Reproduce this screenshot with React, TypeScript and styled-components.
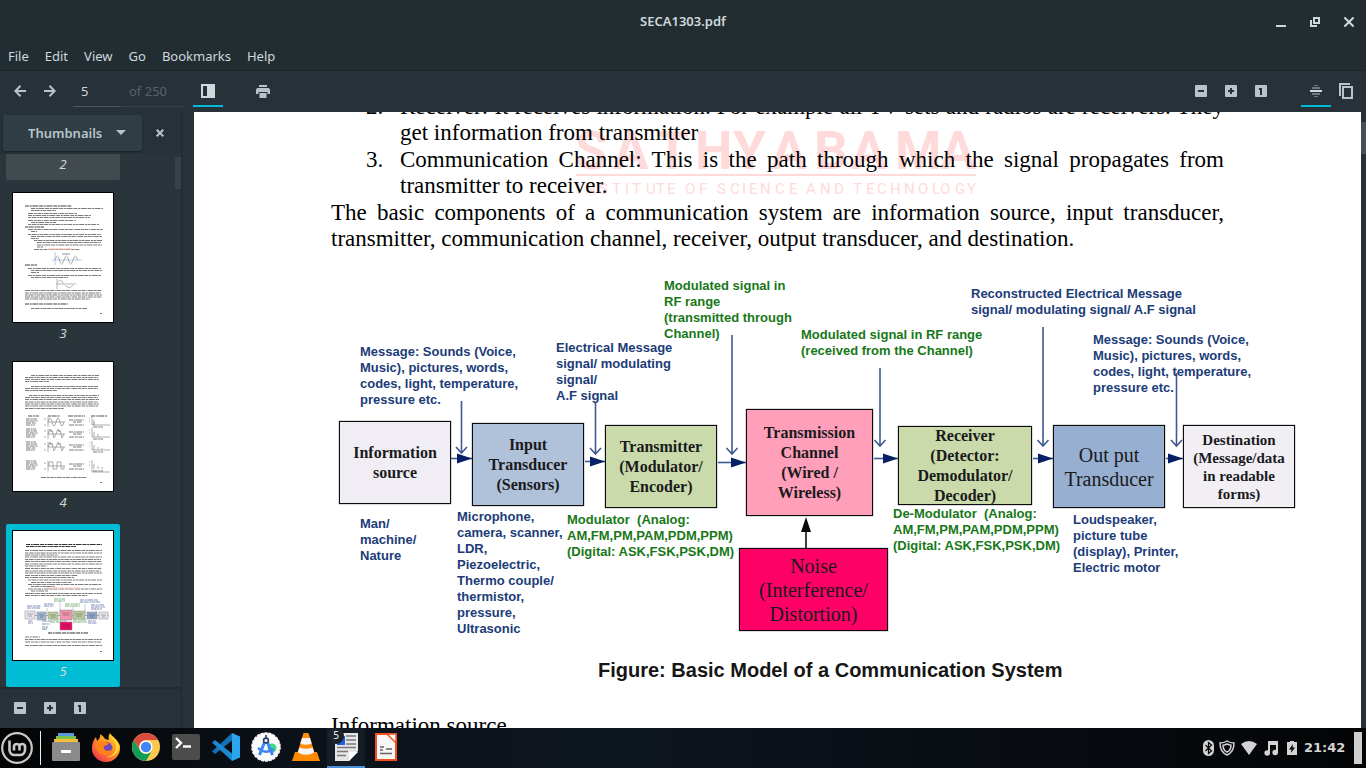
import React from "react";
import styled, { createGlobalStyle } from "styled-components";

const GlobalStyle = createGlobalStyle`
  *, *::before, *::after { box-sizing: border-box; }
  html, body { margin: 0; height: 100%; overflow: hidden; background: #263238; }
  body { font-family: "Noto Sans", "Open Sans", sans-serif; font-size: 13px; color: #cfd8dc; }
  button, input, select { font: inherit; color: inherit; }
  svg { display: block; }
`;

/* ---------- window frame ---------- */

const Screen = styled.div`
  display: flex;
  flex-direction: column;
  height: 100vh;
`;

const TitleBar = styled.header`
  position: relative;
  display: flex;
  align-items: center;
  justify-content: center;
  height: 44px;
  flex: none;
  padding-bottom: 2px;
  background: #222d32;
`;

const Title = styled.h1`
  margin: 0;
  font-size: 13px;
  line-height: 18px;
  font-weight: 600;
`;

const WindowButtons = styled.div`
  position: absolute;
  top: 0;
  right: 0;
  height: 44px;
  display: flex;
  align-items: center;
`;

const WindowButton = styled.button`
  width: 34px;
  height: 34px;
  padding: 0;
  border: 0;
  background: none;
  display: flex;
  align-items: center;
  justify-content: center;
`;

const MenuBar = styled.nav`
  display: flex;
  align-items: center;
  gap: 16px;
  height: 27px;
  flex: none;
  padding: 0 8px 2px;
  background: #222d32;
  border-bottom: 1px solid #1d272b;
`;

const MenuItem = styled.button`
  padding: 0;
  border: 0;
  background: none;
  line-height: 24px;
`;

const Toolbar = styled.div`
  display: flex;
  align-items: stretch;
  height: 41px;
  flex: none;
  padding: 4px 5px 5px;
  background: #263238;
`;

const ToolButton = styled.button<{ $active?: boolean; $gapBefore?: number }>`
  display: flex;
  align-items: center;
  justify-content: center;
  width: 30px;
  margin-left: ${(p) => p.$gapBefore ?? 0}px;
  padding: 2px 0 0;
  border: 0;
  border-bottom: 2px solid ${(p) => (p.$active ? "#00bcd4" : "transparent")};
  background: none;
  color: #b9c4ca;
`;

const PageField = styled.label`
  display: flex;
  margin: 0 0 0 8px;
  width: 112px;
  font-size: 13px;
`;

const PageInput = styled.input`
  width: 48px;
  padding: 0 8px;
  border: 0;
  border-bottom: 1px solid #4d585d;
  background: none;
  outline: 0;
`;

const PageTotal = styled.span`
  flex: 1;
  display: flex;
  align-items: center;
  padding-left: 8px;
  border-bottom: 1px solid #333f45;
  color: #56626a;
`;

const Spacer = styled.div`
  flex: 1;
`;

/* ---------- side pane ---------- */

const Body = styled.div`
  display: flex;
  flex: 1;
  min-height: 0;
`;

const SidePane = styled.aside`
  display: flex;
  flex-direction: column;
  width: 194px;
  flex: none;
  border-right: 12px solid #263238;
  background: #263238;
  box-shadow: inset -1px 0 0 #202b30;
`;

const PaneHeader = styled.div`
  display: flex;
  align-items: center;
  height: 42px;
  flex: none;
  padding: 0 3px;
`;

const PaneSelectWrap = styled.div`
  position: relative;
  width: 140px;
  padding-right: 1px;
`;

const PaneSelect = styled.select`
  appearance: none;
  width: 100%;
  height: 36px;
  padding: 0 25px;
  border: 0;
  border-radius: 2px;
  background: #2f3d44;
  box-shadow: 0 1px 2px rgba(0, 0, 0, 0.35);
  font-weight: 600;
  color: #b9c4ca;
`;

const SelectCaret = styled.svg`
  position: absolute;
  right: 17px;
  top: 15px;
  pointer-events: none;
`;

const ThumbViewport = styled.div`
  position: relative;
  flex: 1;
  min-height: 0;
  overflow: hidden;
  background: #29353b;
  margin-right: 1px;
`;

const ThumbList = styled.ul`
  list-style: none;
  margin: -137px 0 0;
  padding: 0 6px;
  display: flex;
  flex-direction: column;
  align-items: flex-start;
  gap: 6px;
`;

const ThumbItem = styled.li<{ $tone: string }>`
  display: flex;
  flex-direction: column;
  align-items: center;
  width: 114px;
  height: 163px;
  padding-top: 6px;
  border-radius: 2px;
  background: ${(p) => p.$tone};
`;

const ThumbLabel = styled.span`
  font-style: italic;
  line-height: 20px;
`;

const ScrollThumb = styled.div<{ $top: number; $width: number; $height: number; $tone: string }>`
  position: absolute;
  right: 0;
  top: ${(p) => p.$top}px;
  width: ${(p) => p.$width}px;
  height: ${(p) => p.$height}px;
  background: ${(p) => p.$tone};
`;

const PaneFooter = styled.div`
  display: flex;
  height: 41px;
  flex: none;
  padding: 0 5px 2px;
  margin-right: 1px;
  border-top: 2px solid #202b30;
`;

/* ---------- document ---------- */

const Viewer = styled.main`
  position: relative;
  flex: 1;
  min-width: 0;
  overflow: hidden;
  background: #263238;
  padding-right: 5px;
`;

const Page = styled.article`
  position: relative;
  isolation: isolate;
  height: 100%;
  overflow: hidden;
  background: #fff;
  color: #000;
  font-family: "Liberation Serif", "Times New Roman", serif;
  font-size: 23px;
  line-height: 26px;
`;

const Column = styled.div`
  position: relative;
  max-width: 893px;
  margin: -18px auto 0;
`;

const Steps = styled.ol`
  list-style: none;
  margin: 0;
  padding: 0 0 0 35px;
`;

const Step = styled.li`
  display: grid;
  grid-template-columns: 34px 1fr;
  margin-bottom: 1px;
  text-align: justify;
`;

const Paragraph = styled.p`
  margin: 0;
  text-align: justify;
`;

const Watermark = styled.svg`
  position: absolute;
  left: 242px;
  top: 34px;
  z-index: -1;
`;

const Figure = styled.figure`
  position: relative;
  height: 462px;
  margin: -2px 0 1px;
`;

const Arrows = styled.svg`
  position: absolute;
  left: 0;
  top: 0;
`;

type BoxProps = { $x: number; $y: number; $w: number; $h: number; $fill: string; $size: number; $line: number; $bold?: boolean };

const Block = styled.div<BoxProps>`
  position: absolute;
  left: ${(p) => p.$x}px;
  top: ${(p) => p.$y}px;
  width: ${(p) => p.$w}px;
  height: ${(p) => p.$h}px;
  display: flex;
  align-items: center;
  justify-content: center;
  border: 1px solid #0c0c0e;
  box-shadow: 0 0 1px #2b2b2f;
  background: ${(p) => p.$fill};
  color: #1a1a1c;
  font-size: ${(p) => p.$size}px;
  line-height: ${(p) => p.$line}px;
  font-weight: ${(p) => (p.$bold ? 700 : 400)};
  text-align: center;
  white-space: pre;
`;

const Note = styled.div<{ $x: number; $y: number; $green?: boolean }>`
  position: absolute;
  left: ${(p) => p.$x}px;
  top: ${(p) => p.$y}px;
  color: ${(p) => (p.$green ? "#187818" : "#203c78")};
  font: 700 13px/16px "Liberation Sans", Arial, sans-serif;
  white-space: pre;
`;

const Caption = styled.figcaption`
  position: absolute;
  left: 267px;
  bottom: 30px;
  color: #161616;
  font: 700 20px/24px "Liberation Sans", Arial, sans-serif;
  white-space: nowrap;
`;

const SectionTitle = styled.h2`
  margin: 0;
  font-size: 23px;
  line-height: 26px;
  font-weight: 400;
`;

/* ---------- desktop panel ---------- */

const Panel = styled.footer`
  display: flex;
  align-items: center;
  height: 40px;
  flex: none;
  background: linear-gradient(90deg, #020304 0, #0b1118 20%, #0d151e 45%, #080c12 75%, #030405 100%);
`;

const MenuLauncher = styled.button`
  width: 36px;
  height: 40px;
  padding: 0 0 0 1px;
  border: 0;
  background: none;
`;

const PanelRule = styled.div`
  width: 1px;
  height: 34px;
  margin: 0 6px 0 4px;
  background: #eceff1;
`;

const Launcher = styled.button<{ $running?: boolean }>`
  position: relative;
  display: flex;
  align-items: center;
  justify-content: center;
  width: 38px;
  height: 40px;
  margin-right: 2px;
  padding: 0 0 2px;
  border: 0;
  background: ${(p) => (p.$running ? "#141c26" : "none")};
  box-shadow: ${(p) => (p.$running ? "inset 0 -2px 0 #4a90d9" : "none")};
`;

const Badge = styled.span`
  position: absolute;
  left: 1px;
  top: 0;
  width: 16px;
  height: 16px;
  border-radius: 8px;
  background: #1c232b;
  color: #f2f2f2;
  font: 10px/15px "Noto Sans", sans-serif;
`;

const Tray = styled.div`
  display: flex;
  align-items: center;
  color: #d3d3d3;
`;

const TrayIcon = styled.span<{ $width: number }>`
  display: flex;
  justify-content: center;
  width: ${(p) => p.$width}px;
`;

const Clock = styled.time`
  width: 52px;
  padding-left: 2px;
  font: 700 13px/16px "DejaVu Sans", sans-serif;
`;

const ShowDesktop = styled.button`
  width: 8px;
  height: 32px;
  margin-right: 4px;
  padding: 0;
  border: 0;
  background: #cfcfcf;
`;

/* ---------- symbols ---------- */

const Arrow = ({ flip }: { flip?: boolean }) => (
  <svg width="12" height="12" viewBox="0 0 12 12" fill="none" stroke="currentColor" strokeWidth="2">
    {flip ? <path d="M0 6h10.500M5.500 .8L10.700 6l-5.200 5.200" /> : <path d="M12 6H1.500M6.500 .8L1.300 6l5.200 5.200" />}
  </svg>
);

const Square = ({ kind }: { kind: "minus" | "plus" | "one" }) => (
  <svg width="12" height="12" viewBox="0 0 12 12">
    <rect width="12" height="12" rx="1" fill="#b9c4ca" />
    {kind === "one" ? (
      <path d="M4 3h3v7H5V5H4z" fill="#263238" />
    ) : (
      <path d={kind === "plus" ? "M3 5h2V3h2v2h2v2H7v2H5V7H3z" : "M3 5h6v2H3z"} fill="#263238" />
    )}
  </svg>
);

/* ---------- thumbnails ---------- */

type Row = [number, number, number];

const TextRows = ({ rows, tone = "#7c7c7c" }: { rows: Row[]; tone?: string }) => (
  <>
    {rows.map(([x1, x2, y], i) => (
      <line
        key={i}
        x1={x1}
        x2={x2}
        y1={y}
        y2={y}
        stroke={tone}
        strokeWidth="1.1"
        strokeDasharray={i % 3 === 0 ? "4 .7 2 .6 6 .8" : i % 3 === 1 ? "3 .6 5 .8 2 .5" : "5 .8 3 .6 4 .7 1 .6"}
      />
    ))}
  </>
);

const Sheet = ({ children }: { children?: React.ReactNode }) => (
  <svg width="102" height="131" viewBox="0 0 102 131">
    <rect x=".5" y=".5" width="101" height="130" fill="#fff" stroke="#000" />
    {children}
  </svg>
);

const PageThree = () => (
  <Sheet>
    <TextRows tone="#444" rows={[[13, 60, 14], [13, 32, 35], [13, 25, 73], [13, 56, 112]]} />
    <TextRows
      rows={[
        [19, 91, 16.5], [19, 44, 18.5], [16, 65, 21.5], [16, 79, 23.5], [16, 78, 25.5], [16, 64, 28.5], [19, 44, 30.5], [16, 87, 32.5],
        [16, 91, 37.5], [19, 25, 39.5], [16, 89, 42.5], [19, 90, 44.5], [19, 27, 46.5], [22, 90, 48.500], [25, 89, 50.500], [25, 90, 53], [25, 31, 55], [22, 68, 57.500],
        [16, 89, 76.500], [19, 90, 78.500], [19, 27, 80.500], [16, 89, 83.500], [19, 56, 85.500],
        [13, 90, 98.500], [13, 89, 101], [13, 90, 103], [13, 90, 105], [13, 78, 107], [19, 75, 116.500], [88, 90, 121.500],
      ]}
    />
    <path d="M36 57h24" stroke="#ffb9b0" />
    <path d="M43 60v13M40 68h30" stroke="#a9bfe6" strokeWidth=".8" />
    <path d="M43 68q2.500-8 4.500 0t4.500 0t4.500 0t4.500 0t4.500 0" fill="none" stroke="#888" strokeWidth=".7" />
    <path d="M45 87v10M44 92h20M46 90q3-4 5 1M53 93q4 5 8 0" fill="none" stroke="#999" strokeWidth=".7" />
    <path d="M50 62h8" stroke="#777" strokeWidth=".8" />
  </Sheet>
);

const PageFour = () => (
  <Sheet>
    <TextRows
      rows={[
        [19, 87, 14.500], [13, 86, 16.500], [13, 87, 18.500], [13, 37, 20.500], [19, 86, 25.500], [13, 86, 27.500], [13, 45, 29.500],
        [17, 87, 34.500], [13, 86, 36.500], [13, 87, 38.500], [13, 86, 41], [13, 87, 43], [13, 86, 45], [13, 52, 47.500],
        [29, 75, 116.500], [88, 90, 121.500],
      ]}
    />
    <TextRows tone="#555" rows={[[16, 27, 55], [36, 48, 55], [56, 73, 55], [79, 95, 55]]} />
    {[60, 72, 85, 104].map((y, i) => (
      <g key={y} stroke="#8a8a8a" strokeWidth=".7" fill="none">
        <TextRows rows={[[14, 25, y - 2], [14, 26, y], [14, 24, y + 2], [14, 23, y + 4]]} />
        {i > 0 && <TextRows rows={[[14, 24, y - 4]]} />}
        <path d={`M36 ${y - 4}v10M36 ${y + 1}h17M32 ${y - 2}h2M32 ${y + 4}h2`} />
        <path
          d={
            i === 3
              ? `M37 ${y + 1}v-4h4v7h4v-7h4v7h3v-3`
              : i === 0
              ? `M36 ${y + 1}q2-8 4 0t4 0t4 0t4 0`
              : `M36 ${y + 1}l2-5 1 3 1-2 2 8 2-4 2-5 1 3 1-2 2 8 2-4`
          }
        />
        <TextRows rows={[[57, 72, y - 1], [61, 70, y + 1], [57, 72, y + 4]]} />
        <path d={`M80 ${y - 5}v${i === 3 ? 12 : 9}h18M77 ${y - 3}h1M77 ${y}h1M82 ${y + 4}v-5M${i ? 86 : 82} ${y + 4}v-3`} />
        {i > 1 && <path d={`M90 ${y + 4}v-2`} />}
        <TextRows rows={[[81, 91, y + 6]]} />
      </g>
    ))}
  </Sheet>
);

const miniBlocks: [number, number, number, number, string][] = [
  [13, 81, 10, 8, "#e6e4ea"],
  [25, 82, 9, 8, "#a4b5cf"],
  [36, 82, 10, 7, "#bccb9d"],
  [48, 80, 12, 10, "#f095ae"],
  [61, 81, 12, 8, "#bccb9d"],
  [75, 82, 10, 7, "#8fa6c8"],
  [87, 82, 9, 7, "#e6e4ea"],
  [48, 92, 12, 8, "#ee0764"],
];

const PageFive = () => (
  <Sheet>
    <TextRows tone="#333" rows={[[14, 90, 14.500], [14, 64, 16.500]]} />
    <TextRows
      rows={[
        [13, 90, 20.500], [13, 90, 23], [13, 46, 25], [13, 90, 27], [13, 89, 29.500], [13, 90, 31.500], [13, 90, 34], [13, 35, 36], [13, 90, 38.500],
        [13, 89, 41], [13, 90, 43], [13, 66, 45.500], [13, 62, 47.500], [16, 90, 50], [19, 60, 52.500], [16, 89, 54.500], [19, 43, 56.500], [16, 90, 59], [19, 36, 61],
        [13, 90, 63.500], [13, 76, 65.500], [13, 28, 107], [13, 90, 109.500], [13, 89, 112], [13, 90, 115.500], [88, 90, 121.500],
      ]}
    />
    <TextRows tone="#ffc4bd" rows={[[34, 68, 58]]} />
    <TextRows tone="#7e90b8" rows={[[68, 86, 70], [68, 88, 72], [15, 29, 76], [15, 29, 78], [32, 42, 74], [32, 42, 76], [79, 92, 75], [79, 93, 77], [79, 90, 79], [16, 21, 91], [16, 21, 93], [30, 38, 91], [30, 38, 94], [30, 36, 97], [30, 35, 99], [76, 84, 91], [76, 85, 93]]} />
    <TextRows tone="#7fb37f" rows={[[42, 53, 69], [42, 53, 71], [53, 68, 74], [53, 68, 76], [38, 54, 90], [38, 54, 92], [61, 75, 90], [61, 75, 92]]} />
    <path d="M48 72v12M61 76v12M73 74v10M84 78v8M35 78v6" stroke="#a4aec4" strokeWidth=".6" />
    <path d="M13 85.500h84M54 90v3" stroke="#66718c" strokeWidth=".6" />
    {miniBlocks.map(([x, y, w, h, fill]) => (
      <g key={`${x}-${y}`}>
        <rect x={x} y={y} width={w} height={h} fill={fill} stroke="#8b8b95" strokeWidth=".5" />
        <path d={`M${x + 2} ${y + 3}h${w - 4}M${x + 3} ${y + 5}h${w - 6}`} stroke="#444" strokeOpacity=".5" strokeWidth=".8" />
      </g>
    ))}
    <TextRows tone="#333" rows={[[36, 76, 103]]} />
  </Sheet>
);

const thumbs = [
  { n: 2, tone: "#404a4f", sheet: <Sheet /> },
  { n: 3, tone: "transparent", sheet: <PageThree /> },
  { n: 4, tone: "transparent", sheet: <PageFour /> },
  { n: 5, tone: "#00bcd4", sheet: <PageFive /> },
];

/* ---------- block diagram data ---------- */

const blocks = [
  { x: 8, y: 171, w: 112, h: 83, fill: "#f0eef4", size: 16, line: 20, bold: true, text: "Information\nsource" },
  { x: 141, y: 173, w: 112, h: 83, fill: "#b0c1da", size: 16, line: 20, bold: true, text: "Input\nTransducer\n(Sensors)" },
  { x: 274, y: 175, w: 112, h: 83, fill: "#cbdaaa", size: 16, line: 20, bold: true, text: "Transmitter\n(Modulator/\nEncoder)" },
  { x: 415, y: 159, w: 127, h: 107, fill: "#ff9fba", size: 16, line: 20, bold: true, text: "Transmission\nChannel\n(Wired /\nWireless)" },
  { x: 567, y: 176, w: 134, h: 79, fill: "#cbdaaa", size: 16, line: 20, bold: true, text: "Receiver\n(Detector:\nDemodulator/\nDecoder)" },
  { x: 722, y: 175, w: 112, h: 83, fill: "#97afd0", size: 20, line: 24, bold: false, text: "Out put\nTransducer" },
  { x: 852, y: 175, w: 112, h: 83, fill: "#f1eff4", size: 15, line: 18, bold: true, text: "Destination\n(Message/data\nin readable\nforms)" },
  { x: 408, y: 298, w: 149, h: 83, fill: "#ff0066", size: 20, line: 24, bold: false, text: "Noise\n(Interference/\nDistortion)" },
];

const message = "Message: Sounds (Voice,\nMusic), pictures, words,\ncodes, light, temperature,\npressure etc.";

const notes = [
  { x: 29, y: 94, text: message },
  { x: 225, y: 90, text: "Electrical Message\nsignal/ modulating\nsignal/\nA.F signal" },
  { x: 333, y: 28, green: true, text: "Modulated signal in\nRF range\n(transmitted through\nChannel)" },
  { x: 470, y: 77, green: true, text: "Modulated signal in RF range\n(received from the Channel)" },
  { x: 640, y: 36, text: "Reconstructed Electrical Message\nsignal/ modulating signal/ A.F signal" },
  { x: 762, y: 82, text: message },
  { x: 29, y: 266, text: "Man/\nmachine/\nNature" },
  { x: 126, y: 259, text: "Microphone,\ncamera, scanner,\nLDR,\nPiezoelectric,\nThermo couple/\nthermistor,\npressure,\nUltrasonic" },
  { x: 236, y: 262, green: true, text: "Modulator  (Analog:\nAM,FM,PM,PAM,PDM,PPM)\n(Digital: ASK,FSK,PSK,DM)" },
  { x: 562, y: 256, green: true, text: "De-Modulator  (Analog:\nAM,FM,PM,PAM,PDM,PPM)\n(Digital: ASK,FSK,PSK,DM)" },
  { x: 742, y: 262, text: "Loudspeaker,\npicture tube\n(display), Printer,\nElectric motor" },
];

const drops: Row[] = [[130.5, 151, 203], [264.5, 152, 204], [401, 85, 204], [549, 118, 196], [712, 77, 196], [845.5, 123, 196]];
const links: Row[] = [[120, 141, 208.5], [254, 274, 211.5], [387, 415, 212.5], [543, 567, 208.5], [702, 722, 208.5], [835, 852, 208.5]];

const Diagram = () => (
  <Figure>
    {blocks.map((b) => (
      <Block key={b.text} $x={b.x} $y={b.y} $w={b.w} $h={b.h} $fill={b.fill} $size={b.size} $line={b.line} $bold={b.bold}>
        {b.text}
      </Block>
    ))}
    <Arrows width="966" height="462" viewBox="0 0 966 462" aria-hidden="true">
      <g stroke="#3f5a92" strokeWidth="1.6" fill="none">
        {drops.map(([x, y1, y2]) => (
          <path key={x} d={`M${x} ${y1}V${y2}M${x - 5.5} ${y2 - 6}l5.500 6 5.500-6`} />
        ))}
        {links.map(([x1, x2, y]) => (
          <path key={x1} d={`M${x1} ${y}H${x2}`} />
        ))}
      </g>
      {links.map(([x1, x2, y]) => (
        <path key={x1} d={`M${x2} ${y}l-15-5v10z`} fill="#052064" />
      ))}
      <path d="M475 298V272" stroke="#111" strokeWidth="1.6" />
      <path d="M475 267l-5 15h10z" fill="#0a0a0a" />
    </Arrows>
    {notes.map((n) => (
      <Note key={`${n.x}-${n.y}`} $x={n.x} $y={n.y} $green={n.green}>
        {n.text}
      </Note>
    ))}
    <Caption>Figure: Basic Model of a Communication System</Caption>
  </Figure>
);

/* ---------- panel icons ---------- */

const MintLogo = () => (
  <svg width="34" height="34" viewBox="0 0 34 34" fill="none" stroke="#c9c9c9">
    <circle cx="16" cy="17" r="14.800" strokeWidth="2.200" />
    <path d="M8.500 9.500v9.500a5 5 0 0 0 5 5h5.500a5 5 0 0 0 5-5v-4a2.900 2.900 0 0 0-5.500 0v4.500v-4.500a2.900 2.900 0 0 0-5.500 0v4.500" strokeWidth="2.600" />
  </svg>
);

const FilesIcon = () => (
  <svg width="28" height="30" viewBox="0 0 28 30">
    <path d="M6 1h16v4H6z" fill="#5a96dc" />
    <path d="M4 4h20v4H4z" fill="#77c14c" />
    <path d="M2 7h24v5H2z" fill="#f6bd3c" />
    <rect y="10" width="28" height="19" rx="1" fill="#8b8b8b" />
    <rect x="9" y="18" width="10" height="3" rx=".8" fill="#fff" />
  </svg>
);

const FirefoxIcon = () => (
  <svg width="28" height="29" viewBox="0 0 28 29">
    <defs>
      <linearGradient id="foxOuter" x1="1" y1="0" x2="0.200" y2="1">
        <stop offset="0" stopColor="#ffe03a" />
        <stop offset=".45" stopColor="#ff9a1f" />
        <stop offset="1" stopColor="#f0354f" />
      </linearGradient>
    </defs>
    <path d="M18 0c1 3 8 6 10 13 1 9-6 16-14 16S-1 22 0 14c.300-4 2-8 4-10l1 4c1-1 4-3 3-7 2 1 4 3 5 5l4 1c-1-3 0-5 1-7z" fill="url(#foxOuter)" />
    <circle cx="14" cy="15" r="6.300" fill="#7349b8" />
    <path d="M3 12c2-4 7-5 10-3l4 1c-1 2-3 2-5 3-1 2 0 4 3 5 3 0 4-2 6-1-2 5-8 6-12 4-4-2-6-6-6-9z" fill="#ff8318" />
    <path d="M18 1c0 4 6 6 6 13 0 6-5 10-10 10 6 1 12-3 13-9C28 8 20 5 18 1z" fill="#ffd634" />
  </svg>
);

const ChromeIcon = () => (
  <svg width="28" height="28" viewBox="0 0 28 28">
    <circle cx="14" cy="14" r="14" fill="#fbc94b" />
    <path d="M1.900 7A14 14 0 0 1 26.100 7H14a7 7 0 0 0-6.500 9.500z" fill="#db4a3f" />
    <path d="M1.900 7A14 14 0 0 0 14 28l6-10.500a7 7 0 0 1-12 0z" fill="#109d58" />
    <circle cx="14" cy="14" r="6.600" fill="#fff" />
    <circle cx="14" cy="14" r="5.200" fill="#4285f4" />
  </svg>
);

const TerminalIcon = () => (
  <svg width="28" height="26" viewBox="0 0 28 26">
    <rect width="28" height="26" rx="2" fill="#4c4c4c" />
    <path d="M4 4l5 5-5 5" fill="none" stroke="#fff" strokeWidth="2.400" />
    <path d="M11 12.500h8" stroke="#fff" strokeWidth="2.400" />
  </svg>
);

const CodeIcon = () => (
  <svg width="28" height="28" viewBox="0 0 28 28">
    <path d="M20 0l8 3.500v21L20 28z" fill="#2ba6ee" />
    <path d="M0 18.500L20 0v7.500L3 21z" fill="#1272b8" />
    <path d="M0 9.500L3 7l17 13.500V28z" fill="#1a89d2" />
  </svg>
);

const StudioIcon = () => (
  <svg width="30" height="30" viewBox="0 0 30 30">
    <circle cx="15" cy="15" r="14" fill="#fafafa" stroke="#fafafa" strokeWidth="1.600" strokeDasharray="3 1" />
    <circle cx="21" cy="16" r="4.500" fill="#3ddc84" />
    <path d="M14 9L8.500 23M16 9l5.500 14" stroke="#4284f3" strokeWidth="3" />
    <path d="M7 16q8 7 16 1" fill="none" stroke="#4284f3" strokeWidth="2.400" />
    <circle cx="15" cy="8.500" r="2.400" fill="#fff" stroke="#24435f" strokeWidth="1.600" />
    <path d="M15 3v4" stroke="#24435f" strokeWidth="1.600" />
  </svg>
);

const VlcIcon = () => (
  <svg width="28" height="28" viewBox="0 0 28 28">
    <path d="M3 19h22l3 9H0z" fill="#ff8a00" />
    <path d="M11.500 0h5l6.500 21q-9 5-18 0z" fill="#ff8c0a" />
    <path d="M10 5h8l1.700 5.500q-5.700 2.500-11.400 0zM7.500 14.500q6.500 2.500 13 0l1.600 5q-8 4.500-16.200 0z" fill="#f7f5f2" />
  </svg>
);

const ReaderIcon = () => (
  <svg width="23" height="28" viewBox="0 0 23 28">
    <path d="M0 0h23v18l-9 10H0z" fill="#e6e6e6" />
    <path d="M14 28v-9h9z" fill="#fff" />
    <path d="M11 3h10M11 7h10M11 11h10M2 14.500h19M2 18.500h11M2 22.500h9" stroke="#7a7a7a" strokeWidth="1.500" />
    <path d="M2 3h8v9H2z" fill="#1d5fe0" />
  </svg>
);

const OfficeIcon = () => (
  <svg width="22" height="28" viewBox="0 0 22 28">
    <rect x="1" y="1" width="20" height="26" fill="#f6f6f6" stroke="#f4511e" strokeWidth="2" />
    <path d="M12 1l9 9V1z" fill="#fff" stroke="#f4511e" strokeWidth="1.500" />
    <path d="M5 14h4M5 17h3M11 16h6M5 20.500h12" stroke="#666" strokeWidth="1.300" />
  </svg>
);

const launchers: { name: string; icon: React.ReactNode; badge?: string }[] = [
  { name: "Files", icon: <FilesIcon /> },
  { name: "Firefox", icon: <FirefoxIcon /> },
  { name: "Chrome", icon: <ChromeIcon /> },
  { name: "Terminal", icon: <TerminalIcon /> },
  { name: "Visual Studio Code", icon: <CodeIcon /> },
  { name: "Android Studio", icon: <StudioIcon /> },
  { name: "VLC", icon: <VlcIcon /> },
  { name: "Document Viewer", icon: <ReaderIcon />, badge: "5" },
  { name: "Impress", icon: <OfficeIcon /> },
];

export default function App() {
  return (
    <Screen>
      <GlobalStyle />
      <TitleBar>
        <Title>SECA1303.pdf</Title>
        <WindowButtons>
          <WindowButton aria-label="Minimize">
            <svg width="10" height="10"><path d="M0 8h10v2H0z" fill="#cfd8dc" /></svg>
          </WindowButton>
          <WindowButton aria-label="Restore">
            <svg width="10" height="10" fill="none" stroke="#cfd8dc" strokeWidth="2">
              <path d="M4 1h5v5H4zM1 3v6h6" />
            </svg>
          </WindowButton>
          <WindowButton aria-label="Close">
            <svg width="10" height="10" stroke="#cfd8dc" strokeWidth="2"><path d="M.4.4l9.200 9.200M9.600.4L.4 9.600" /></svg>
          </WindowButton>
        </WindowButtons>
      </TitleBar>
      <MenuBar>
        {["File", "Edit", "View", "Go", "Bookmarks", "Help"].map((m) => (
          <MenuItem key={m}>{m}</MenuItem>
        ))}
      </MenuBar>
      <Toolbar>
        <ToolButton aria-label="Previous page"><Arrow /></ToolButton>
        <ToolButton aria-label="Next page"><Arrow flip /></ToolButton>
        <PageField>
          <PageInput aria-label="Page" defaultValue="5" />
          <PageTotal>of 250</PageTotal>
        </PageField>
        <ToolButton $active $gapBefore={8} aria-label="Side pane">
          <svg width="14" height="14"><path d="M0 0h14v14H0z" fill="#cfd8dc" /><path d="M2 2h4v10H2z" fill="#263238" /></svg>
        </ToolButton>
        <ToolButton $gapBefore={25} aria-label="Print">
          <svg width="14" height="13" fill="#b9c4ca">
            <path d="M3 0h8v2H3zM2 3h10a2 2 0 0 1 2 2v4h-2.500V7h-9v2H0V5a2 2 0 0 1 2-2zM3.500 8h7v5h-7z" />
          </svg>
        </ToolButton>
        <Spacer />
        <ToolButton aria-label="Zoom out"><Square kind="minus" /></ToolButton>
        <ToolButton aria-label="Zoom in"><Square kind="plus" /></ToolButton>
        <ToolButton aria-label="Normal size"><Square kind="one" /></ToolButton>
        <ToolButton $active $gapBefore={25} aria-label="Continuous">
          <svg width="12" height="12">
            <path d="M4 0h4v1H4zM2 2h8v2H2zM2 8h8v2H2zM4 11h4v1H4z" fill="#6d7a80" />
            <path d="M0 5h12v2H0z" fill="#cfd8dc" />
          </svg>
        </ToolButton>
        <ToolButton aria-label="Dual page">
          <svg width="14" height="16" fill="none" stroke="#b9c4ca" strokeWidth="2"><path d="M1 13V1h10M4 4h9v11H4z" /></svg>
        </ToolButton>
      </Toolbar>
      <Body>
        <SidePane>
          <PaneHeader>
            <PaneSelectWrap>
              <PaneSelect aria-label="Side pane view" defaultValue="Thumbnails">
                <option>Thumbnails</option>
                <option>Index</option>
                <option>Bookmarks</option>
              </PaneSelect>
              <SelectCaret width="10" height="5"><path d="M0 0h10L5 5z" fill="#b9c4ca" /></SelectCaret>
            </PaneSelectWrap>
            <WindowButton aria-label="Close pane">
              <svg width="8" height="8" stroke="#b9c4ca" strokeWidth="2"><path d="M.7.7l6.600 6.600M7.300.7L.7 7.300" /></svg>
            </WindowButton>
          </PaneHeader>
          <ThumbViewport>
            <ThumbList>
              {thumbs.map((t) => (
                <ThumbItem key={t.n} $tone={t.tone}>
                  {t.sheet}
                  <ThumbLabel>{t.n}</ThumbLabel>
                </ThumbItem>
              ))}
            </ThumbList>
            <ScrollThumb $top={3} $width={6} $height={32} $tone="#374349" />
          </ThumbViewport>
          <PaneFooter>
            <ToolButton aria-label="Smaller thumbnails"><Square kind="minus" /></ToolButton>
            <ToolButton aria-label="Larger thumbnails"><Square kind="plus" /></ToolButton>
            <ToolButton aria-label="Default thumbnails"><Square kind="one" /></ToolButton>
          </PaneFooter>
        </SidePane>
        <Viewer>
          <Page>
            <Column>
              <Watermark width="406" height="72" viewBox="0 0 406 72" fill="#ffdada" fontFamily="Roboto, sans-serif">
                <text x="2 40 83 122 160 198 241 278 322 367" y="41" fontSize="53" fontWeight="700">
                  SATHYABAMA
                </text>
                <path d="M3 46h400v2H3z" />
                <text
                  x="4 12 26 39 52 59 73 83 94 104 112 126 136 144 157 169 176 187 202 216 226 233 247 261 272 280 293 304 317 331 345 359 367 382 394"
                  y="66"
                  fontSize="15"
                >
                  INSTITUTE OF SCIENCE AND TECHNOLOGY
                </text>
              </Watermark>
              <Steps start={2}>
                <Step>
                  <span>2.</span>
                  <span>Receiver: It receives information. For example all TV sets and radios are receivers. They get information from transmitter</span>
                </Step>
                <Step>
                  <span>3.</span>
                  <span>Communication Channel: This is the path through which the signal propagates from transmitter to receiver.</span>
                </Step>
              </Steps>
              <Paragraph>
                The basic components of a communication system are information source, input transducer, transmitter, communication channel,
                receiver, output transducer, and destination.
              </Paragraph>
              <Diagram />
              <SectionTitle>Information source</SectionTitle>
            </Column>
          </Page>
          <ScrollThumb $top={10} $width={5} $height={32} $tone="#435056" />
        </Viewer>
      </Body>
      <Panel>
        <MenuLauncher aria-label="Menu"><MintLogo /></MenuLauncher>
        <PanelRule />
        {launchers.map((l) => (
          <Launcher key={l.name} aria-label={l.name} $running={!!l.badge}>
            {l.icon}
            {l.badge && <Badge>{l.badge}</Badge>}
          </Launcher>
        ))}
        <Spacer />
        <Tray>
          <TrayIcon $width={14}>
            <svg width="11" height="16"><rect width="11" height="16" rx="5.500" fill="#d3d3d3" /><path d="M2.500 5l6 6-3 2.500v-11l3 2.500-6 6" fill="none" stroke="#050608" strokeWidth="1.200" /></svg>
          </TrayIcon>
          <TrayIcon $width={23}>
            <svg width="16" height="16" viewBox="0 0 16 16">
              <path d="M8 1q3 2 7 2 0 9-7 12Q1 12 1 3q4 0 7-2z" fill="none" stroke="#d3d3d3" strokeWidth="1.500" />
              <path d="M8 4q2 1 4 1.200Q12 10 8 12.200 4 10 4 5.200 6 5 8 4z" fill="none" stroke="#d3d3d3" strokeWidth="1.500" />
            </svg>
          </TrayIcon>
          <TrayIcon $width={22}>
            <svg width="16" height="14"><path d="M0 3q8-6 16 0L8 14z" fill="#d3d3d3" /></svg>
          </TrayIcon>
          <TrayIcon $width={21}>
            <svg width="14" height="15" fill="#d3d3d3">
              <path d="M4 0h10v12h-2V4H6v8H4z" /><circle cx="3.200" cy="12" r="2.800" /><circle cx="11.200" cy="11.500" r="2.800" />
            </svg>
          </TrayIcon>
          <TrayIcon $width={21}>
            <svg width="10" height="14"><path d="M3 0h4v1h3v13H0V1h3z" fill="#d3d3d3" /><path d="M6 3L2 8.500h2.500L4 12l4-5.500H5.500z" fill="#050608" /></svg>
          </TrayIcon>
          <Clock>21:42</Clock>
          <ShowDesktop aria-label="Show desktop" />
        </Tray>
      </Panel>
    </Screen>
  );
}
